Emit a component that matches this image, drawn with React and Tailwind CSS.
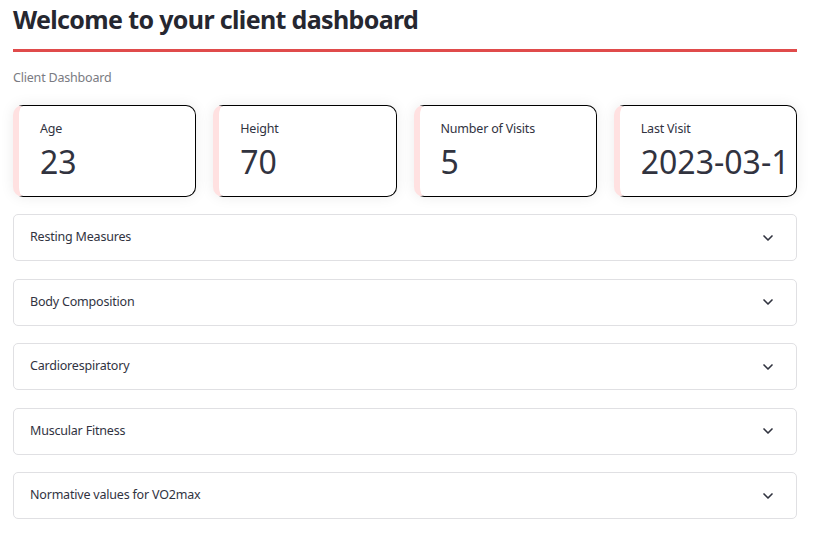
import { ChevronDown } from 'lucide-react';

const METRICS = [
  { label: 'Age', value: '23' },
  { label: 'Height', value: '70' },
  { label: 'Number of Visits', value: '5' },
  { label: 'Last Visit', value: '2023-03-1' },
];

const SECTIONS = [
  'Resting Measures',
  'Body Composition',
  'Cardiorespiratory',
  'Muscular Fitness',
  'Normative values for VO2max',
];

function MetricCard({ label, value }) {
  return (
    <div className="h-[92px] rounded-[10px] border border-black border-l-[6px] border-l-[#ffe1e1] bg-white pl-[21px] pt-[15px] shadow-[0_0_14px_rgba(0,0,0,0.08)] overflow-hidden">
      <div className="text-[12.5px] leading-[16px] tracking-[-0.2px] text-[#31333f]">{label}</div>
      <div className="mt-[5px] whitespace-nowrap text-[32px] leading-[40px] text-[#31333f]">{value}</div>
    </div>
  );
}

export default function App() {
  return (
    <div className="min-h-[537px] bg-white px-[13px] font-['Noto_Sans',sans-serif]">
      <div className="w-[784px]">
        <h1 className="pt-[2px] text-[25px] font-bold leading-[34px] tracking-[-0.65px] text-[#262730]">
          Welcome to your client dashboard
        </h1>
        <div className="mt-[13px] h-[3px] bg-[#e04b4b]" />
        <p className="mt-[18px] text-[12.5px] leading-[16px] tracking-[-0.2px] text-[#7a7b82]">Client Dashboard</p>

        <div className="mt-[19px] grid grid-cols-4 gap-[17px]">
          {METRICS.map((m) => (
            <MetricCard key={m.label} {...m} />
          ))}
        </div>

        <div className="mt-[17px] flex flex-col gap-[17.5px]">
          {SECTIONS.map((s) => (
            <div
              key={s}
              className="flex h-[47px] items-center justify-between rounded-[5px] border border-[#e0e0e3] bg-white pl-[16px] pr-[20px]"
            >
              <span className="text-[12.5px] tracking-[-0.2px] text-[#31333f]">{s}</span>
              <ChevronDown size={16} strokeWidth={2.5} className="text-[#31333f]" />
            </div>
          ))}
        </div>
      </div>
    </div>
  );
}
